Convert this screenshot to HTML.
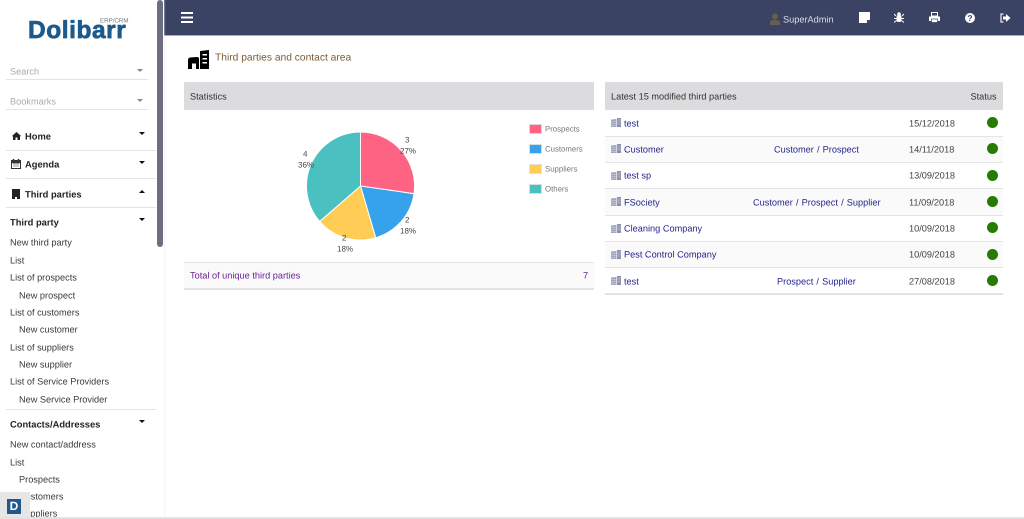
<!DOCTYPE html>
<html><head><meta charset="utf-8"><style>
html,body{margin:0;padding:0;width:1024px;height:519px;overflow:hidden;background:#fff;font-family:"Liberation Sans",sans-serif;font-size:9.2px;color:#3a3a3a;text-rendering:geometricPrecision}
body{filter:blur(.3px)}
.t{position:absolute;white-space:nowrap;line-height:12px;transform:translateY(-5.750px)}
.b{font-weight:bold;color:#222;font-size:9.350px}
.r{position:absolute;background:#e4e4e4;height:1px}
.l{color:#25258a}
.w{word-spacing:.6px}
.d{color:#444}
.dot{position:absolute;left:987px;width:11px;height:11px;border-radius:50%;background:#267c00}
.up,.dn{position:absolute;width:0;height:0;border-left:3.500px solid transparent;border-right:3.500px solid transparent}
.dn{border-top:3.500px solid #111}.up{border-bottom:3.500px solid #111}
.g{border-top-color:#888!important}
.ci{position:absolute;left:611px}
</style></head><body>
<!-- top bar -->
<div style="position:absolute;left:164px;top:0;width:860px;height:35px;background:#3b4364;border-bottom:1px solid #aab"></div>
<div style="position:absolute;left:181px;top:12px;width:12px;height:2px;background:#fff;box-shadow:0 4.500px 0 #fff,0 9px 0 #fff"></div>
<svg style="position:absolute;left:770px;top:13px" width="10" height="12" viewBox="0 0 10 12"><circle cx="5" cy="3.500" r="3" fill="#665f4f"/><path d="M0 12V9q1-2 5-2t5 2v3z" fill="#665f4f"/></svg>
<div class="t" style="left:783px;top:19px;color:#d8dbe6">SuperAdmin</div>
<svg style="position:absolute;left:859px;top:12px" width="11" height="11" viewBox="0 0 11 11"><path d="M0 0H11V7.500L7.500 11H0z" fill="#fff"/><path d="M8 8H10.500L8 10.500z" fill="#3b4364"/></svg>
<svg style="position:absolute;left:894px;top:12px" width="10" height="11" viewBox="0 0 10 11" fill="#fff"><rect x="2.500" y="3" width="5" height="7" rx="2"/><circle cx="5" cy="2" r="1.800"/><path d="M0 2l2 2M10 2L8 4M0 6.500H2.500M10 6.500H7.500M0 10.500l2.500-2M10 10.500l-2.500-2" stroke="#fff" fill="none"/></svg>
<svg style="position:absolute;left:929px;top:12px" width="11" height="11" viewBox="0 0 11 11" fill="#fff"><path d="M2.500 4V0.500H8.500V4z" fill="none" stroke="#fff"/><path d="M0 4.500H11V9H0z"/><rect x="2.500" y="7" width="6" height="3.500" fill="#fff" stroke="#3b4364" stroke-width=".7"/></svg>
<div style="position:absolute;left:965px;top:13px;width:10px;height:10px;border-radius:50%;background:#fff;color:#3b4364;font:bold 8.500px/10px 'Liberation Sans',sans-serif;text-align:center">?</div>
<svg style="position:absolute;left:1000px;top:13px" width="11" height="10" viewBox="0 0 11 10"><path d="M3.500 1H1V9H3.500" fill="none" stroke="#e4e6ee" stroke-width="1.300"/><path d="M3 3.500H6V1L10.500 5 6 9V6.500H3z" fill="#fff"/></svg>

<!-- title -->
<svg style="position:absolute;left:188px;top:50px" width="21" height="20" viewBox="0 0 21 20"><path d="M0 10Q0 8 2 7.500L9 7Q11 7 11 9V19H8V13.500H4V19H0z" fill="#000"/><path d="M12 1L21 0V19H12z" fill="#000"/><path d="M14.500 4H19V5.500H14.500zM14.500 8H19V9.500H14.500zM14.500 12H19V13.500H14.500z" fill="#fff"/></svg>
<div class="t" style="left:215px;top:57.500px;font-size:10.250px;color:#7d5a36">Third parties and contact area</div>

<!-- Stats -->
<div style="position:absolute;left:184px;top:82px;width:410px;height:28px;background:#dcdcdf"></div>
<div class="t" style="left:190px;top:96px;color:#333">Statistics</div>
<svg style="position:absolute;left:300px;top:125px" width="125" height="125" viewBox="300 125 125 125">
<g stroke="#fff" stroke-width="1">
<path d="M360.500 186V132A54 54 0 0 1 414 193.700z" fill="#ff6384"/>
<path d="M360.500 186L414 193.700A54 54 0 0 1 375.700 237.800z" fill="#36a2eb"/>
<path d="M360.500 186L375.700 237.800A54 54 0 0 1 319.700 221.400z" fill="#ffcd56"/>
<path d="M360.500 186L319.700 221.400A54 54 0 0 1 360.500 132z" fill="#4bc0c0"/>
</g></svg>
<div style="font-size:8px;color:#444">
<div class="t" style="left:405px;top:140px">3</div><div class="t" style="left:400px;top:151px">27%</div>
<div class="t" style="left:303px;top:154px">4</div><div class="t" style="left:298px;top:165px">36%</div>
<div class="t" style="left:405px;top:220px">2</div><div class="t" style="left:400px;top:231px">18%</div>
<div class="t" style="left:342px;top:238px">2</div><div class="t" style="left:337px;top:249px">18%</div>
</div>
<div style="position:absolute;left:529px;top:124px;width:11px;height:8px;background:#ff6384;border:1px solid #e0d8da"></div>
<div style="position:absolute;left:529px;top:144px;width:11px;height:8px;background:#36a2eb;border:1px solid #d8dde0"></div>
<div style="position:absolute;left:529px;top:164px;width:11px;height:8px;background:#ffcd56;border:1px solid #e4e0d4"></div>
<div style="position:absolute;left:529px;top:184px;width:11px;height:8px;background:#4bc0c0;border:1px solid #d8dddd"></div>
<div style="font-size:7.800px;color:#777">
<div class="t" style="left:545px;top:129px">Prospects</div>
<div class="t" style="left:545px;top:149px">Customers</div>
<div class="t" style="left:545px;top:169px">Suppliers</div>
<div class="t" style="left:545px;top:189px">Others</div>
</div>
<div style="position:absolute;left:184px;top:262px;width:410px;height:25px;background:#fafafa;border-top:1px solid #e4e4e4;border-bottom:2px solid #e4e4e4"></div>
<div class="t" style="left:190px;top:275px;color:#6c1f96">Total of unique third parties</div>
<div class="t" style="left:583px;top:275px;color:#6c1f96">7</div>

<!-- Latest -->
<div style="position:absolute;left:605px;top:82px;width:398px;height:28px;background:#dcdcdf"></div>
<div class="t" style="left:611px;top:96px;color:#333">Latest 15 modified third parties</div>
<div class="t" style="left:970.500px;top:96px;color:#333">Status</div>
<div style="position:absolute;left:605px;top:137px;width:398px;height:26px;background:#fafafa"></div>
<div style="position:absolute;left:605px;top:189px;width:398px;height:26px;background:#fafafa"></div>
<div style="position:absolute;left:605px;top:242px;width:398px;height:25px;background:#fafafa"></div>
<div class="r" style="left:605px;top:136px;width:398px"></div>
<div class="r" style="left:605px;top:162px;width:398px"></div>
<div class="r" style="left:605px;top:188px;width:398px"></div>
<div class="r" style="left:605px;top:215px;width:398px"></div>
<div class="r" style="left:605px;top:241px;width:398px"></div>
<div class="r" style="left:605px;top:267px;width:398px"></div>
<div class="r" style="left:605px;top:293px;width:398px;height:2px"></div>

<svg width="0" height="0" style="position:absolute"><defs><g id="c"><path d="M0 1.500L5.500 1V9H0z" fill="#a2a6bc"/><path d="M6 0H10V9H6z" fill="#8a8fae"/><path d="M0 3.500H5.500M0 5.500H5.500M0 7.500H5.500M6 2H10M6 4H10M6 6H10" stroke="#d4d6e2" stroke-width=".6"/></g></defs></svg>
<svg class="ci" style="top:118px" width="10" height="9"><use href="#c"/></svg>
<svg class="ci" style="top:144px" width="10" height="9"><use href="#c"/></svg>
<svg class="ci" style="top:171px" width="10" height="9"><use href="#c"/></svg>
<svg class="ci" style="top:197px" width="10" height="9"><use href="#c"/></svg>
<svg class="ci" style="top:224px" width="10" height="9"><use href="#c"/></svg>
<svg class="ci" style="top:250px" width="10" height="9"><use href="#c"/></svg>
<svg class="ci" style="top:276px" width="10" height="9"><use href="#c"/></svg>

<div class="l">
<div class="t" style="left:624px;top:123px">test</div>
<div class="t" style="left:624px;top:149px">Customer</div>
<div class="t" style="left:624px;top:175px">test sp</div>
<div class="t" style="left:624px;top:202px">FSociety</div>
<div class="t" style="left:624px;top:228px">Cleaning Company</div>
<div class="t" style="left:624px;top:254px">Pest Control Company</div>
<div class="t" style="left:624px;top:281px">test</div>
<div class="t w" style="left:774px;top:149px">Customer / Prospect</div>
<div class="t w" style="left:753px;top:202px">Customer / Prospect / Supplier</div>
<div class="t w" style="left:777px;top:281px">Prospect / Supplier</div>
</div>
<div class="d">
<div class="t" style="left:909px;top:123px">15/12/2018</div>
<div class="t" style="left:909px;top:149px">14/11/2018</div>
<div class="t" style="left:909px;top:175px">13/09/2018</div>
<div class="t" style="left:909px;top:202px">11/09/2018</div>
<div class="t" style="left:909px;top:228px">10/09/2018</div>
<div class="t" style="left:909px;top:254px">10/09/2018</div>
<div class="t" style="left:909px;top:281px">27/08/2018</div>
</div>
<div class="dot" style="top:117px"></div>
<div class="dot" style="top:143px"></div>
<div class="dot" style="top:170px"></div>
<div class="dot" style="top:196px"></div>
<div class="dot" style="top:222px"></div>
<div class="dot" style="top:249px"></div>
<div class="dot" style="top:275px"></div>

<!-- sidebar -->
<div style="position:absolute;left:0;top:0;width:164px;height:519px;background:#fff;box-shadow:0 0 2px #e4e4e4"></div>
<div class="t" style="left:28px;top:31px;font:bold 24.500px/28px 'Liberation Sans',sans-serif;color:#1d5a8c;transform:translateY(-14px);-webkit-text-stroke:.7px #1d5a8c;letter-spacing:.55px">Dolibarr</div>
<div class="t" style="left:100px;top:21px;font-size:6.200px;color:#777">ERP/CRM</div>
<div class="t" style="left:10px;top:71px;color:#aaa">Search</div>
<div class="dn g" style="left:137px;top:69px"></div>
<div class="r" style="left:6px;top:79px;width:142px"></div>
<div class="t" style="left:10px;top:101px;color:#aaa">Bookmarks</div>
<div class="dn g" style="left:137px;top:99px"></div>
<div class="r" style="left:6px;top:109px;width:142px"></div>

<svg style="position:absolute;left:12px;top:132px" width="9" height="8" viewBox="0 0 9 8"><path d="M0 4L4.500 0 9 4 8 4.500V8H5.500V5.500H3.500V8H1V4.500z" fill="#222"/></svg>
<div class="t b" style="left:25px;top:136px">Home</div><div class="dn" style="left:139px;top:132px"></div>
<div class="r" style="left:6px;top:150px;width:150px"></div>
<svg style="position:absolute;left:11px;top:159px" width="10" height="10" viewBox="0 0 10 10"><rect x=".5" y="1.500" width="9" height="8" fill="#fff" stroke="#333"/><path d="M0 1.500H10V4H0zM2 0H3V2H2zM7 0H8V2H7zM2 5H8M2 7H8" fill="#333" stroke="#333" stroke-width=".6"/></svg>
<div class="t b" style="left:25px;top:164px">Agenda</div><div class="dn" style="left:139px;top:161px"></div>
<div class="r" style="left:6px;top:178px;width:150px"></div>
<svg style="position:absolute;left:12px;top:189px" width="8" height="10" viewBox="0 0 8 10"><path d="M0 0H8V10H5V8H3V10H0z" fill="#222"/></svg>
<div class="t b" style="left:25px;top:194px">Third parties</div><div class="up" style="left:139px;top:190px"></div>
<div class="r" style="left:6px;top:207px;width:150px"></div>
<div class="t b" style="left:10px;top:222px">Third party</div><div class="dn" style="left:139px;top:218px"></div>
<div class="t" style="left:10px;top:242px">New third party</div>
<div class="t" style="left:10px;top:260px">List</div>
<div class="t" style="left:10px;top:277px">List of prospects</div>
<div class="t" style="left:19px;top:295px">New prospect</div>
<div class="t" style="left:10px;top:312px">List of customers</div>
<div class="t" style="left:19px;top:329px">New customer</div>
<div class="t" style="left:10px;top:347px">List of suppliers</div>
<div class="t" style="left:19px;top:364px">New supplier</div>
<div class="t" style="left:10px;top:381px">List of Service Providers</div>
<div class="t" style="left:19px;top:399px">New Service Provider</div>
<div class="r" style="left:6px;top:409px;width:150px"></div>
<div class="t b" style="left:10px;top:424px">Contacts/Addresses</div><div class="dn" style="left:139px;top:420px"></div>
<div class="t" style="left:10px;top:444px">New contact/address</div>
<div class="t" style="left:10px;top:462px">List</div>
<div class="t" style="left:19px;top:479px">Prospects</div>
<div class="t" style="left:19px;top:496px">Customers</div>
<div class="t" style="left:19px;top:513px">Suppliers</div>
<div style="position:absolute;left:157px;top:0;width:6px;height:247px;background:#6d6f80;border-radius:3px"></div>
<div style="position:absolute;left:0;top:492px;width:30px;height:27px;background:#e6e6e6"></div>
<div style="position:absolute;left:7px;top:499px;width:14px;height:15px;background:#23588c;color:#fff;font:bold 12px/15px 'Liberation Sans',sans-serif;text-align:center">D</div>
<div style="position:absolute;left:0;top:517px;width:1024px;height:2px;background:#e2e2e2"></div>
</body></html>
